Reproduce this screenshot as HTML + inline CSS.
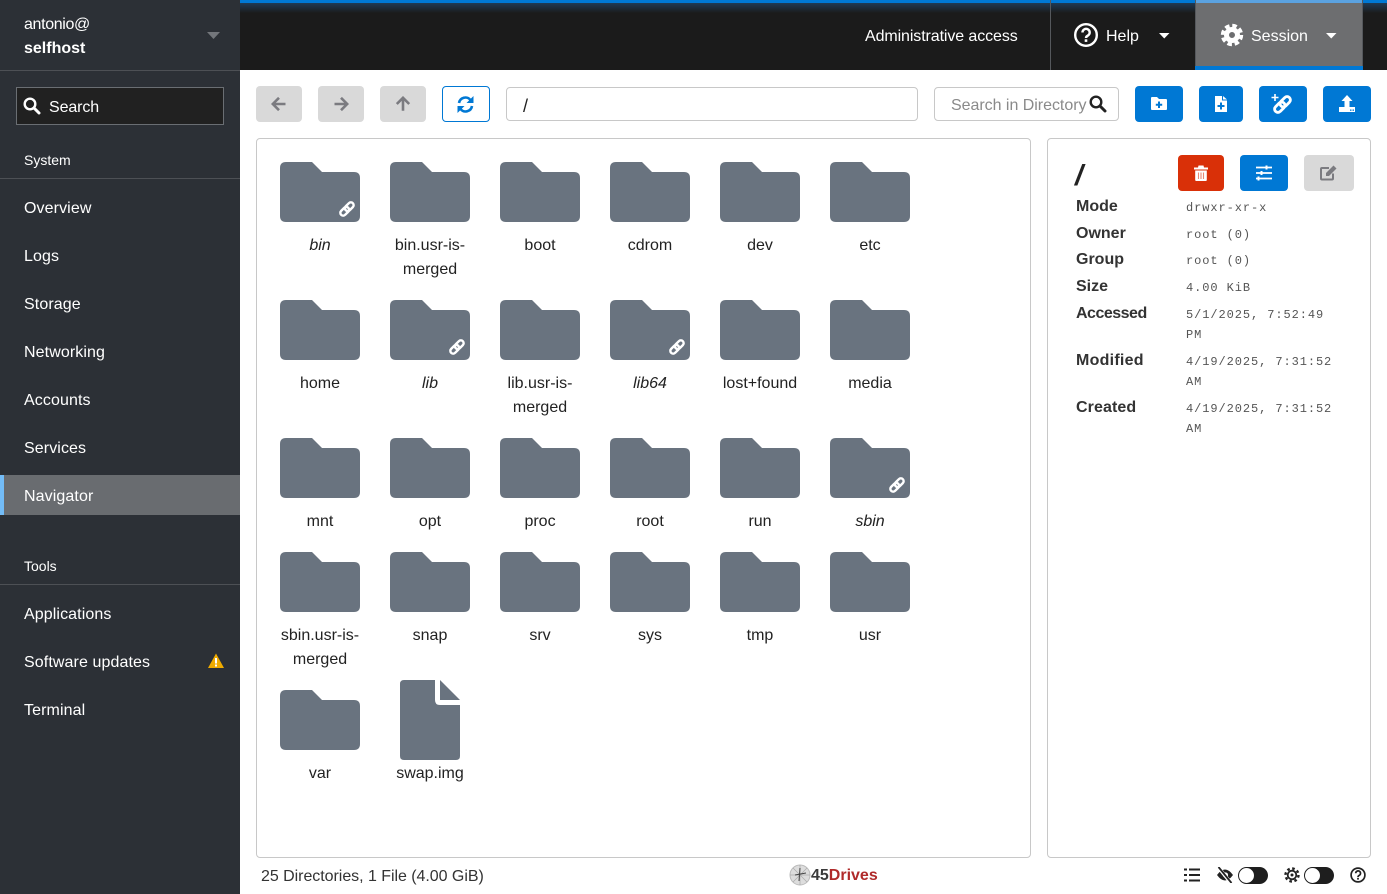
<!DOCTYPE html>
<html><head><meta charset="utf-8"><style>
html,body{margin:0;padding:0;width:1387px;height:894px;overflow:hidden;background:#fff;font-family:"Liberation Sans",sans-serif;color:#151515}
div,svg{position:absolute;box-sizing:border-box}
.t{white-space:nowrap;line-height:24px}
.n{left:24px;color:#fff;font-size:16px;white-space:nowrap;line-height:24px;letter-spacing:.1px}
.h{left:24px;color:#fff;font-size:14px;white-space:nowrap;line-height:20px}
.l{left:0;width:240px;height:1px;background:#4d5055}
.b{height:36px;top:86px;border-radius:4px;background:#d9d9d9}
.bl{background:#0078d4}
.fo{width:80px;height:60px}
.c{width:100px;text-align:center;font-size:16px;line-height:24px;color:#222}
.k{left:1076px;font-size:16px;font-weight:bold;color:#333;line-height:20px;white-space:nowrap}
.v{left:1186px;font-family:"Liberation Mono",monospace;font-size:12px;letter-spacing:.92px;color:#555;line-height:20px;white-space:nowrap}
</style></head><body>
<svg width="0" height="0" style="left:0;top:0">
<defs>
<symbol id="folder" viewBox="0 0 80 60"><path d="M6 0H32L42 10H74Q80 10 80 16V54Q80 60 74 60H6Q0 60 0 54V6Q0 0 6 0Z" fill="#69737f"/></symbol>
<symbol id="lk" viewBox="0 0 16 16"><g fill="none" stroke="currentColor" stroke-width="2.400"><rect x="-5" y="-2.800" width="10" height="5.600" rx="2.800" transform="translate(10.300 5.700) rotate(-45)"/><rect x="-5" y="-2.800" width="10" height="5.600" rx="2.800" transform="translate(5.700 10.300) rotate(-45)"/></g></symbol>
</defs></svg>

<!-- Sidebar -->
<div style="left:0;top:0;width:240px;height:894px;background:#2c3036"></div>
<div class="t" style="left:24px;top:13px;color:#fff;font-size:16px;letter-spacing:-.35px">antonio@</div>
<div class="t" style="left:24px;top:37px;color:#fff;font-size:16px;font-weight:bold">selfhost</div>
<svg style="left:207px;top:32px" width="14" height="8"><path d="M0 0H13L6.500 7Z" fill="#73767b"/></svg>
<div class="l" style="top:70px"></div>
<div style="left:16px;top:87px;width:208px;height:38px;background:#212121;border:1px solid #6a6e73"></div>
<svg style="left:23px;top:97px" width="18" height="18"><circle cx="7" cy="7" r="5.300" fill="none" stroke="#fff" stroke-width="2.400"/><path d="M11 11 16 16" stroke="#fff" stroke-width="3" stroke-linecap="round"/></svg>
<div class="n" style="left:49px;top:96px;letter-spacing:-.1px">Search</div>
<div class="h" style="top:150px">System</div>
<div class="l" style="top:178px"></div>
<div class="n" style="top:197px">Overview</div>
<div class="n" style="top:245px">Logs</div>
<div class="n" style="top:293px">Storage</div>
<div class="n" style="top:341px">Networking</div>
<div class="n" style="top:389px">Accounts</div>
<div class="n" style="top:437px">Services</div>
<div style="left:0;top:475px;width:240px;height:40px;background:#696c70;border-left:4px solid #73bcf7"></div>
<div class="n" style="top:485px">Navigator</div>
<div class="h" style="top:556px">Tools</div>
<div class="l" style="top:584px"></div>
<div class="n" style="top:603px">Applications</div>
<div class="n" style="top:651px">Software updates</div>
<svg style="left:208px;top:653px" width="16" height="15"><path d="M8 0.500 16 15H0Z" fill="#f0ab00"/><rect x="7" y="5" width="2" height="5.500" fill="#fff"/><rect x="7" y="11.500" width="2" height="2" fill="#fff"/></svg>
<div class="n" style="top:699px">Terminal</div>

<!-- Top bar -->
<div style="left:240px;top:0;width:1147px;height:70px;background:#1b1b1b"></div>
<div style="left:240px;top:3px;width:1147px;height:10px;background:linear-gradient(#1f3a55,#1b1b1b)"></div>
<div style="left:240px;top:0;width:1147px;height:3px;background:#0078d4"></div>
<div class="t" style="left:865px;top:25px;color:#fff;font-size:16px;letter-spacing:-.1px">Administrative access</div>
<div style="left:1050px;top:0;width:1px;height:70px;background:#55585c"></div>
<svg style="left:1073px;top:22px" width="26" height="26"><circle cx="13" cy="13" r="10.800" fill="none" stroke="#fff" stroke-width="2.400"/><path d="M9.500 10.500a3.600 3.600 0 1 1 5.500 3q-2 1-2 2.500" fill="none" stroke="#fff" stroke-width="2.400"/><rect x="11.700" y="17.300" width="2.600" height="2.600" fill="#fff"/></svg>
<div class="t" style="left:1106px;top:25px;color:#fff;font-size:16px">Help</div>
<svg style="left:1159px;top:33px" width="11" height="6"><path d="M0 0H10.500L5.250 5.500Z" fill="#fff"/></svg>
<div style="left:1195px;top:0;width:168px;height:70px;background:#6d6e70;border-left:1px solid #55585c;border-right:1px solid #55585c"></div>
<div style="left:1196px;top:0;width:166px;height:3px;background:#5ba2e0"></div>
<div style="left:1195px;top:66px;width:168px;height:4px;background:#0078d4"></div>
<svg style="left:1220px;top:23px" width="24" height="24"><circle cx="12" cy="12" r="9.500" fill="none" stroke="#fff" stroke-width="3.400" stroke-dasharray="4.600 2.860"/><circle cx="12" cy="12" r="5.500" fill="none" stroke="#fff" stroke-width="5"/></svg>
<div class="t" style="left:1251px;top:25px;color:#fff;font-size:16px">Session</div>
<svg style="left:1326px;top:33px" width="11" height="6"><path d="M0 0H10.500L5.250 5.500Z" fill="#fff"/></svg>

<!-- Toolbar -->
<div class="b" style="left:256px;width:46px"></div>
<svg style="left:271px;top:96px" width="16" height="16"><path d="M14.500 8H2M8 1.800 1.800 8 8 14.200" fill="none" stroke="#7b7b80" stroke-width="2.600"/></svg>
<div class="b" style="left:318px;width:46px"></div>
<svg style="left:333px;top:96px" width="16" height="16"><path d="M1.500 8H14M8 1.800 14.200 8 8 14.200" fill="none" stroke="#7b7b80" stroke-width="2.600"/></svg>
<div class="b" style="left:380px;width:46px"></div>
<svg style="left:395px;top:96px" width="16" height="16"><path d="M8 14.800V2M1.800 8 8 1.800 14.200 8" fill="none" stroke="#7b7b80" stroke-width="2.600"/></svg>
<div class="b" style="left:442px;width:48px;background:#fff;border:1px solid #0078d4"></div>
<svg style="left:457px;top:96px" width="17" height="17"><g fill="none" stroke="#0078d4" stroke-width="2.600"><path d="M2 7A6.500 6.500 0 0 1 13.500 4"/><path d="M15 10A6.500 6.500 0 0 1 3.500 13"/></g><path d="M16.500 0V7H9.500Z" fill="#0078d4"/><path d="M.5 17V10H7.500Z" fill="#0078d4"/></svg>
<div style="left:506px;top:87px;width:412px;height:34px;border:1px solid #c8c8c8;border-radius:4px"></div>
<div class="t" style="left:523px;top:94px;font-size:18px;color:#222">/</div>
<div style="left:934px;top:87px;width:185px;height:34px;border:1px solid #c8c8c8;border-radius:4px"></div>
<div class="t" style="left:951px;top:94px;font-size:16px;color:#8a8a8a;letter-spacing:-.03px">Search in Directory</div>
<svg style="left:1089px;top:95px" width="18" height="18"><circle cx="7" cy="7" r="5.300" fill="none" stroke="#222" stroke-width="2.400"/><path d="M11 11 16 16" stroke="#222" stroke-width="3" stroke-linecap="round"/></svg>

<div class="b bl" style="left:1135px;width:48px"></div>
<svg style="left:1151px;top:97px" width="16" height="14"><path d="M1 0H6L8 2H15Q16 2 16 3V12Q16 13 15 13H1Q0 13 0 12V1Q0 0 1 0Z" fill="#fff"/><path d="M8 4.500V11M4.800 7.700H11.200" stroke="#0078d4" stroke-width="2"/></svg>
<div class="b bl" style="left:1199px;width:44px"></div>
<svg style="left:1215px;top:96px" width="12" height="16"><path d="M0 0H7V4.500H12V16H0Z" fill="#fff"/><path d="M8 0 12 3.500H8Z" fill="#fff"/><path d="M6 6.500V13.500M2.500 10H9.500" stroke="#0078d4" stroke-width="2"/></svg>
<div class="b bl" style="left:1259px;width:48px"></div>
<svg style="left:1270px;top:92px;color:#fff" width="24" height="24"><use href="#lk" x="3" y="3" width="19" height="19"/><path d="M5 2V9M1.500 5.500H8.500" stroke="#fff" stroke-width="1.600"/></svg>
<div class="b bl" style="left:1323px;width:48px"></div>
<svg style="left:1339px;top:95px" width="16" height="17"><path d="M8 0 13.500 6H10.500V12H5.500V6H2.500Z" fill="#fff"/><path d="M0 12H16V17H0Z" fill="#fff"/><rect x="11" y="14.500" width="1.500" height="1.300" fill="#0078d4"/><rect x="13.500" y="14.500" width="1.500" height="1.300" fill="#0078d4"/></svg>

<!-- Panels -->
<div style="left:256px;top:138px;width:775px;height:720px;border:1px solid #c8c8c8;border-radius:4px"></div>
<div style="left:1047px;top:138px;width:324px;height:720px;border:1px solid #c8c8c8;border-radius:4px"></div>

<!-- Row 1 -->
<svg class="fo" style="left:280px;top:162px"><use href="#folder" width="80" height="60"/></svg>
<svg style="left:339px;top:201px;color:#fff" width="16" height="16"><use href="#lk" width="16" height="16"/></svg>
<div class="c" style="left:270px;top:234px;font-style:italic">bin</div>
<svg class="fo" style="left:390px;top:162px"><use href="#folder" width="80" height="60"/></svg>
<div class="c" style="left:380px;top:234px">bin.usr-is-<br>merged</div>
<svg class="fo" style="left:500px;top:162px"><use href="#folder" width="80" height="60"/></svg>
<div class="c" style="left:490px;top:234px">boot</div>
<svg class="fo" style="left:610px;top:162px"><use href="#folder" width="80" height="60"/></svg>
<div class="c" style="left:600px;top:234px">cdrom</div>
<svg class="fo" style="left:720px;top:162px"><use href="#folder" width="80" height="60"/></svg>
<div class="c" style="left:710px;top:234px">dev</div>
<svg class="fo" style="left:830px;top:162px"><use href="#folder" width="80" height="60"/></svg>
<div class="c" style="left:820px;top:234px">etc</div>
<!-- Row 2 -->
<svg class="fo" style="left:280px;top:300px"><use href="#folder" width="80" height="60"/></svg>
<div class="c" style="left:270px;top:372px">home</div>
<svg class="fo" style="left:390px;top:300px"><use href="#folder" width="80" height="60"/></svg>
<svg style="left:449px;top:339px;color:#fff" width="16" height="16"><use href="#lk" width="16" height="16"/></svg>
<div class="c" style="left:380px;top:372px;font-style:italic">lib</div>
<svg class="fo" style="left:500px;top:300px"><use href="#folder" width="80" height="60"/></svg>
<div class="c" style="left:490px;top:372px">lib.usr-is-<br>merged</div>
<svg class="fo" style="left:610px;top:300px"><use href="#folder" width="80" height="60"/></svg>
<svg style="left:669px;top:339px;color:#fff" width="16" height="16"><use href="#lk" width="16" height="16"/></svg>
<div class="c" style="left:600px;top:372px;font-style:italic">lib64</div>
<svg class="fo" style="left:720px;top:300px"><use href="#folder" width="80" height="60"/></svg>
<div class="c" style="left:710px;top:372px">lost+found</div>
<svg class="fo" style="left:830px;top:300px"><use href="#folder" width="80" height="60"/></svg>
<div class="c" style="left:820px;top:372px">media</div>
<!-- Row 3 -->
<svg class="fo" style="left:280px;top:438px"><use href="#folder" width="80" height="60"/></svg>
<div class="c" style="left:270px;top:510px">mnt</div>
<svg class="fo" style="left:390px;top:438px"><use href="#folder" width="80" height="60"/></svg>
<div class="c" style="left:380px;top:510px">opt</div>
<svg class="fo" style="left:500px;top:438px"><use href="#folder" width="80" height="60"/></svg>
<div class="c" style="left:490px;top:510px">proc</div>
<svg class="fo" style="left:610px;top:438px"><use href="#folder" width="80" height="60"/></svg>
<div class="c" style="left:600px;top:510px">root</div>
<svg class="fo" style="left:720px;top:438px"><use href="#folder" width="80" height="60"/></svg>
<div class="c" style="left:710px;top:510px">run</div>
<svg class="fo" style="left:830px;top:438px"><use href="#folder" width="80" height="60"/></svg>
<svg style="left:889px;top:477px;color:#fff" width="16" height="16"><use href="#lk" width="16" height="16"/></svg>
<div class="c" style="left:820px;top:510px;font-style:italic">sbin</div>
<!-- Row 4 -->
<svg class="fo" style="left:280px;top:552px"><use href="#folder" width="80" height="60"/></svg>
<div class="c" style="left:270px;top:624px">sbin.usr-is-<br>merged</div>
<svg class="fo" style="left:390px;top:552px"><use href="#folder" width="80" height="60"/></svg>
<div class="c" style="left:380px;top:624px">snap</div>
<svg class="fo" style="left:500px;top:552px"><use href="#folder" width="80" height="60"/></svg>
<div class="c" style="left:490px;top:624px">srv</div>
<svg class="fo" style="left:610px;top:552px"><use href="#folder" width="80" height="60"/></svg>
<div class="c" style="left:600px;top:624px">sys</div>
<svg class="fo" style="left:720px;top:552px"><use href="#folder" width="80" height="60"/></svg>
<div class="c" style="left:710px;top:624px">tmp</div>
<svg class="fo" style="left:830px;top:552px"><use href="#folder" width="80" height="60"/></svg>
<div class="c" style="left:820px;top:624px">usr</div>
<!-- Row 5 -->
<svg class="fo" style="left:280px;top:690px"><use href="#folder" width="80" height="60"/></svg>
<div class="c" style="left:270px;top:762px">var</div>
<svg style="left:400px;top:680px" width="60" height="80"><path d="M4 0H35V20Q35 25 40 25H60V76Q60 80 56 80H4Q0 80 0 76V4Q0 0 4 0Z" fill="#69737f"/><path d="M40 0 60 20H40Z" fill="#69737f"/></svg>
<div class="c" style="left:380px;top:762px">swap.img</div>

<!-- Details -->
<div class="t" style="left:1075px;top:161px;font-size:29px;font-weight:bold;font-style:italic;color:#222;line-height:30px">/</div>
<div class="b" style="left:1178px;top:155px;width:46px;background:#d93008"></div>
<svg style="left:1194px;top:165px" width="14" height="16"><path d="M0 2.500H14V4.500H0ZM4.500 0.500H9.500L10 2.500H4Z" fill="#fff"/><path d="M1.200 5.500H12.800V15Q12.800 16 11.800 16H2.200Q1.200 16 1.200 15Z" fill="#fff"/><path d="M4.500 7.500V14M7 7.500V14M9.500 7.500V14" stroke="#e98a75" stroke-width="1.100"/></svg>
<div class="b" style="left:1240px;top:155px;width:48px;background:#0078d4"></div>
<svg style="left:1256px;top:165px" width="16" height="16"><path d="M0 2.500H16M0 8H16M0 13.500H16" stroke="#fff" stroke-width="1.800"/><rect x="9.500" y="0.500" width="2" height="4" fill="#fff"/><rect x="4.500" y="6" width="2" height="4" fill="#fff"/><rect x="1.500" y="11.500" width="2" height="4" fill="#fff"/></svg>
<div class="b" style="left:1304px;top:155px;width:50px"></div>
<svg style="left:1320px;top:165px" width="18" height="16"><path d="M13 8.500V13.500Q13 14.500 12 14.500H2Q1 14.500 1 13.500V4Q1 3 2 3H9" fill="none" stroke="#7b7b80" stroke-width="2"/><path d="M6 8 13.500 .5 16.500 3.500 9 11H6Z" fill="#7b7b80"/></svg>

<div class="k" style="top:197px">Mode</div><div class="v" style="top:198px">drwxr-xr-x</div>
<div class="k" style="top:224px">Owner</div><div class="v" style="top:225px">root (0)</div>
<div class="k" style="top:250px">Group</div><div class="v" style="top:251px">root (0)</div>
<div class="k" style="top:277px">Size</div><div class="v" style="top:278px">4.00 KiB</div>
<div class="k" style="top:304px;letter-spacing:-.5px">Accessed</div><div class="v" style="top:305px">5/1/2025, 7:52:49<br>PM</div>
<div class="k" style="top:351px;letter-spacing:.25px">Modified</div><div class="v" style="top:352px">4/19/2025, 7:31:52<br>AM</div>
<div class="k" style="top:398px;letter-spacing:.1px">Created</div><div class="v" style="top:399px">4/19/2025, 7:31:52<br>AM</div>

<!-- Footer -->
<div class="t" style="left:261px;top:865px;font-size:16px;color:#333;letter-spacing:-.04px">25 Directories, 1 File (4.00 GiB)</div>
<svg style="left:789px;top:864px" width="22" height="22"><circle cx="11" cy="11" r="10" fill="#ddd" stroke="#bbb"/><path d="M1 11H21M11 1V21M4 4 18 18M18 4 4 18" stroke="#aaa" stroke-width=".7"/><path d="M6 11 17 9M11 4 10 17" stroke="#444" stroke-width="1"/></svg>
<div class="t" style="left:811px;top:864px;font-size:16px;font-weight:bold;color:#3a3a3a">45<span style="color:#b02a2a">Drives</span></div>

<svg style="left:1184px;top:868px" width="16" height="14"><path d="M0 1.500H3M5 1.500H16M0 7H3M5 7H16M0 12.500H3M5 12.500H16" stroke="#222" stroke-width="2"/></svg>
<svg style="left:1216px;top:867px" width="18" height="16"><path d="M1 8Q5 2.500 9 2.500T17 8Q13 13.500 9 13.500T1 8Z" fill="#222"/><circle cx="9.500" cy="8" r="2.600" fill="#fff"/><path d="M2 0 15 16" stroke="#fff" stroke-width="3.500"/><path d="M2.500 0 15.500 16" stroke="#222" stroke-width="1.800"/></svg>
<div style="left:1238px;top:867px;width:30px;height:17px;border-radius:9px;background:#1e1e1e"></div>
<div style="left:1239px;top:868px;width:15px;height:15px;border-radius:50%;background:#fff"></div>
<svg style="left:1284px;top:867px" width="16" height="16"><circle cx="8" cy="8" r="6.500" fill="none" stroke="#222" stroke-width="2.400" stroke-dasharray="2.600 2.500"/><circle cx="8" cy="8" r="4.300" fill="none" stroke="#222" stroke-width="1.800"/><circle cx="8" cy="8" r="1.500" fill="#222"/></svg>
<div style="left:1304px;top:867px;width:30px;height:17px;border-radius:9px;background:#1e1e1e"></div>
<div style="left:1305px;top:868px;width:15px;height:15px;border-radius:50%;background:#fff"></div>
<svg style="left:1350px;top:867px" width="16" height="16"><circle cx="8" cy="8" r="6.900" fill="none" stroke="#222" stroke-width="1.700"/><path d="M5.700 6.300a2.400 2.400 0 1 1 3.700 2q-1.400.7-1.400 1.700" fill="none" stroke="#222" stroke-width="1.700"/><rect x="7.100" y="10.800" width="1.800" height="1.800" fill="#222"/></svg>
</body></html>
